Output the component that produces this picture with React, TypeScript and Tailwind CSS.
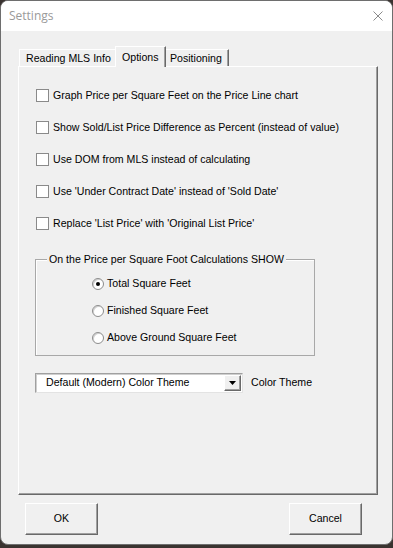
import React from "react";

function Check({ label }: { label: string }) {
  return (
    <div className="flex items-center h-[13px] gap-[4px] pl-px">
      <div className="w-[13px] h-[13px] bg-white border border-[#8a8a8a] shrink-0" />
      <span className="leading-[13px] whitespace-nowrap">{label}</span>
    </div>
  );
}

function Radio({ label, checked }: { label: string; checked?: boolean }) {
  return (
    <div className="flex items-center h-[13px] gap-[3px]">
      <div className="w-[12px] h-[12px] rounded-full bg-white border border-[#8c8c8c] shadow-[inset_1px_1px_0_#d0d0d0] flex items-center justify-center shrink-0">
        {checked && <div className="w-[4px] h-[4px] rounded-full bg-black" />}
      </div>
      <span className="leading-[13px] whitespace-nowrap">{label}</span>
    </div>
  );
}

function Btn({ label }: { label: string }) {
  return (
    <div className="w-[73px] h-[32px] flex items-center justify-center bg-[#f0f0f0] border border-t-white border-l-white border-r-[#696969] border-b-[#696969] shadow-[inset_-1px_-1px_0_#a0a0a0]">
      {label}
    </div>
  );
}

export default function App() {
  return (
    <div className="w-[393px] h-[548px] bg-[#3a3330] font-['Liberation_Sans',Arial,sans-serif] text-[10.6px] text-black">
      <div className="w-[393px] h-[545px] rounded-[8px] overflow-hidden border border-[#6e6e6e] bg-[#f0f0f0] flex flex-col">
        {/* title bar */}
        <div className="h-[30px] bg-white flex items-center justify-between pl-[8px] pr-[9px] shrink-0">
          <span className="text-[12px] text-[#9a9a9a] font-['Open_Sans','Liberation_Sans',sans-serif]">Settings</span>
          <svg width="10" height="10" viewBox="0 0 10 10" className="mb-[1px]">
            <path d="M0.5 0.5 L9.5 9.5 M9.5 0.5 L0.5 9.5" stroke="#8a8a8a" strokeWidth="1" fill="none" />
          </svg>
        </div>
        {/* body */}
        <div className="flex flex-col pt-[15px]">
          {/* tabs */}
          <div className="flex items-end h-[20px] ml-[18px]">
            <div className="w-[97px] h-[17px] border-t border-l border-white shadow-[inset_-1px_0_0_#a0a0a0] flex items-center pl-[6px] pt-[1px]">
              Reading MLS Info
            </div>
            <div className="relative z-10 -mb-px w-[51px] h-[21px] bg-[#f0f0f0] border-t border-l border-white border-r border-r-[#696969] shadow-[inset_-1px_0_0_#a0a0a0] flex items-start pt-[3px] pl-[6px] -ml-px">
              Options
            </div>
            <div className="w-[63px] h-[17px] border-t border-white border-r border-r-[#696969] shadow-[inset_-1px_0_0_#a0a0a0] flex items-center pl-[4px] pt-[1px]">
              Positioning
            </div>
          </div>
          {/* panel */}
          <div className="ml-[17px] w-[360px] h-[429px] border border-t-white border-l-white border-r-[#696969] border-b-[#696969] shadow-[inset_-1px_-1px_0_#a0a0a0] flex flex-col pl-[16px] pt-[22px]">
            <div className="flex flex-col gap-[19px]">
              <Check label="Graph Price per Square Feet on the Price Line chart" />
              <Check label="Show Sold/List Price Difference as Percent (instead of value)" />
              <Check label="Use DOM from MLS instead of calculating" />
              <Check label="Use 'Under Contract Date' instead of 'Sold Date'" />
              <Check label="Replace 'List Price' with 'Original List Price'" />
            </div>
            <div className="relative mt-[29px] w-[280px] h-[97px] border border-[#a8a8a8] shadow-[inset_1px_1px_0_#ffffff] pl-[56px] pt-[17px] flex flex-col gap-[14px]">
              <span className="absolute -top-[8px] left-[11px] px-[2px] bg-[#f0f0f0] leading-[14px] whitespace-nowrap">
                On the Price per Square Foot Calculations SHOW
              </span>
              <Radio label="Total Square Feet" checked />
              <Radio label="Finished Square Feet" />
              <Radio label="Above Ground Square Feet" />
            </div>
            <div className="mt-[17px] flex items-center gap-[8px]">
              <div className="w-[208px] h-[20px] bg-white border border-t-[#a0a0a0] border-l-[#a0a0a0] border-r-[#e3e3e3] border-b-[#e3e3e3] shadow-[inset_1px_1px_0_#cfcfcf] flex items-center justify-between pl-[10px] pr-px">
                <span className="whitespace-nowrap">Default (Modern) Color Theme</span>
                <div className="w-[17px] h-[16px] bg-[#f0f0f0] border border-t-white border-l-white border-r-[#696969] border-b-[#696969] shadow-[inset_-1px_-1px_0_#a0a0a0] flex items-center justify-center">
                  <svg width="7" height="4" viewBox="0 0 7 4">
                    <path d="M0 0 H7 L3.5 4 Z" fill="#000" />
                  </svg>
                </div>
              </div>
              <span className="whitespace-nowrap">Color Theme</span>
            </div>
          </div>
          {/* buttons */}
          <div className="mt-[8px] flex justify-between pl-[24px] pr-[30px]">
            <Btn label="OK" />
            <Btn label="Cancel" />
          </div>
        </div>
      </div>
    </div>
  );
}
